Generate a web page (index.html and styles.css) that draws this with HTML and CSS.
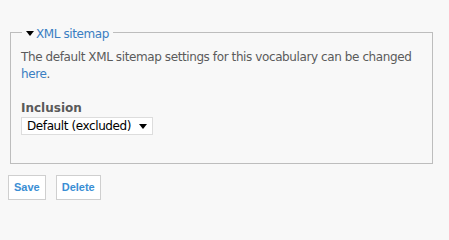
FILE: index.html
```html
<!DOCTYPE html>
<html>
<head>
<meta charset="utf-8">
<link rel="stylesheet" href="styles.css">
</head>
<body>
<form class="page">
  <fieldset class="box">
    <legend class="box-legend"><a class="legend-link" href="#"><svg class="caret" width="8" height="5" viewBox="0 0 8 5"><path d="M0 0H8L4 5Z" fill="#000"/></svg>XML sitemap</a></legend>
    <p class="desc">The default XML sitemap settings for this vocabulary can be changed <a class="link" href="#">here</a>.</p>
    <div class="field">
      <label class="field-label">Inclusion</label>
      <span class="select-wrap">
        <select class="select"><option>Default (excluded)</option></select>
        <svg class="select-arrow" width="8" height="5" viewBox="0 0 8 5"><path d="M0 0H8L4 5Z" fill="#000"/></svg>
      </span>
    </div>
  </fieldset>
  <div class="actions">
    <button type="button" class="btn">Save</button>
    <button type="button" class="btn">Delete</button>
  </div>
</form>
</body>
</html>
```
FILE: styles.css
```css
html, body {
  margin: 0;
  background: #f8f8f8;
}
body {
  padding: 25px 14px 0 8px;
  font-family: "DejaVu Sans", Verdana, sans-serif;
  font-size: 12px;
  letter-spacing: -0.4px;
  color: #5b5b5b;
}
.box {
  margin: 0 2px;
  padding: 0 10px 28px 10px;
  border: 1px solid #bdbdbd;
  min-width: 0;
}
.box-legend {
  padding: 0 4px;
  margin-left: 1px;
  font-size: 12px;
  line-height: 14px;
}
.legend-link {
  color: #3a7ec2;
  text-decoration: none;
  display: inline-flex;
  align-items: center;
}
.caret {
  margin-right: 2px;
}
.desc {
  margin: 8px 0 0 0;
  line-height: 17px;
  font-size: 12px;
}
.link {
  color: #3a7ec2;
  text-decoration: none;
}
.field {
  margin-top: 18px;
}
.field-label {
  display: block;
  font-weight: bold;
  font-size: 12px;
  line-height: 14px;
  letter-spacing: 0;
  color: #5a5a5a;
}
.select-wrap {
  position: relative;
  display: inline-block;
  margin-top: 2px;
}
.select {
  appearance: none;
  -webkit-appearance: none;
  width: 132px;
  height: 18px;
  border: 1px solid #ddd;
  background: #fff;
  font-family: "DejaVu Sans", Verdana, sans-serif;
  font-size: 12px;
  letter-spacing: -0.4px;
  color: #000;
  padding: 0 0 0 5px;
  margin: 0;
  border-radius: 0;
}
.select-arrow {
  position: absolute;
  right: 6px;
  top: 7px;
}
.actions {
  display: flex;
  gap: 10px;
  margin-top: 11px;
}
.btn {
  height: 25px;
  padding: 0 5px;
  border: 1px solid #cfcfcf;
  background: #fff;
  font-family: "Liberation Sans", Arial, sans-serif;
  font-weight: bold;
  font-size: 11px;
  letter-spacing: 0;
  color: #3a8ed4;
  border-radius: 0;
}
```
